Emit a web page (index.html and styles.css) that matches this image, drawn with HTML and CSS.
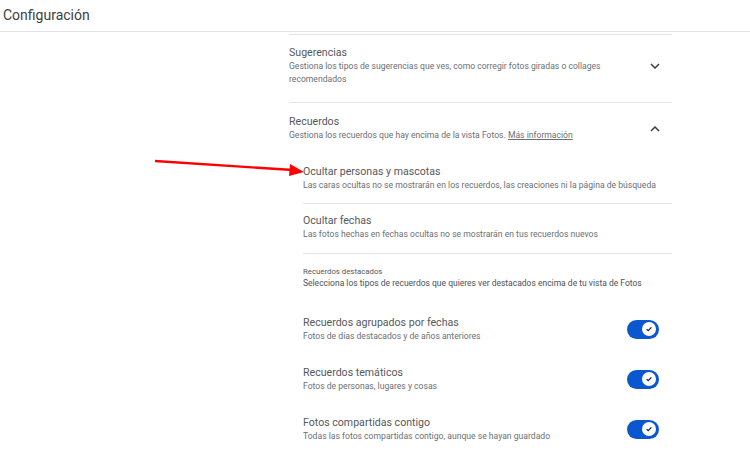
FILE: index.html
```html
<!DOCTYPE html>
<html lang="es">
<head>
    <meta charset="UTF-8">
    <meta name="viewport" content="width=device-width, initial-scale=1.0">
    <title>Configuración</title>
    <link rel="stylesheet" href="styles.css">
</head>
<body>
    <header class="topbar">Configuración</header>

    <main class="settings">
        <section class="group">
            <div class="group-head">
                <div class="text">
                    <div class="title">Sugerencias</div>
                    <div class="desc">Gestiona los tipos de sugerencias que ves, como corregir fotos giradas o collages recomendados</div>
                </div>
                <svg class="chevron" viewBox="0 0 10 6" width="10" height="6"><path d="M1 1l4 4 4-4" /></svg>
            </div>
        </section>

        <section class="group">
            <div class="group-head open">
                <div class="text">
                    <div class="title">Recuerdos</div>
                    <div class="desc">Gestiona los recuerdos que hay encima de la vista Fotos. <a href="#">Más información</a></div>
                </div>
                <svg class="chevron" viewBox="0 0 10 6" width="10" height="6"><path d="M1 5l4-4 4 4" /></svg>
            </div>

            <div class="sub">
                <div class="item first">
                    <div class="title">Ocultar personas y mascotas</div>
                    <div class="desc">Las caras ocultas no se mostrarán en los recuerdos, las creaciones ni la página de búsqueda</div>
                </div>
                <div class="item">
                    <div class="title">Ocultar fechas</div>
                    <div class="desc">Las fotos hechas en fechas ocultas no se mostrarán en tus recuerdos nuevos</div>
                </div>
                <div class="featured">
                    <div class="label">Recuerdos destacados</div>
                    <div class="desc">Selecciona los tipos de recuerdos que quieres ver destacados encima de tu vista de Fotos</div>
                </div>

                <div class="toggle-row first">
                    <div class="text">
                        <div class="title">Recuerdos agrupados por fechas</div>
                        <div class="desc">Fotos de días destacados y de años anteriores</div>
                    </div>
                    <span class="switch"><span class="thumb"><svg viewBox="0 0 10 10" width="8" height="8"><path d="M2 5.2l2 2 4-4.2" /></svg></span></span>
                </div>
                <div class="toggle-row">
                    <div class="text">
                        <div class="title">Recuerdos temáticos</div>
                        <div class="desc">Fotos de personas, lugares y cosas</div>
                    </div>
                    <span class="switch"><span class="thumb"><svg viewBox="0 0 10 10" width="8" height="8"><path d="M2 5.2l2 2 4-4.2" /></svg></span></span>
                </div>
                <div class="toggle-row">
                    <div class="text">
                        <div class="title">Fotos compartidas contigo</div>
                        <div class="desc">Todas las fotos compartidas contigo, aunque se hayan guardado</div>
                    </div>
                    <span class="switch"><span class="thumb"><svg viewBox="0 0 10 10" width="8" height="8"><path d="M2 5.2l2 2 4-4.2" /></svg></span></span>
                </div>
            </div>
        </section>
    </main>

    <!-- annotation arrow -->
    <svg class="arrow" width="160" height="30" viewBox="0 0 160 30">
        <path d="M0 5 L138 14" stroke="#f00" stroke-width="2.4" fill="none" />
        <path d="M135 8 L149 16 L134 20 Z" fill="#f00" />
    </svg>
</body>
</html>
```

FILE: styles.css
```css
body {
    margin: 0;
    font-family: Roboto, "Liberation Sans", Arial, sans-serif;
    background: #fff;
    color: #4d5156;
    position: relative;
}
.topbar {
    height: 31px;
    line-height: 30px;
    padding-left: 3px;
    font-size: 14px;
    color: #3c4043;
    border-bottom: 1px solid #e3e3e3;
}
.settings {
    width: 383px;
    margin: 2px 0 0 289px;
}
.group {
    border-top: 1px solid #e3e3e3;
}
.group-head {
    display: flex;
    align-items: center;
    justify-content: space-between;
    padding: 11px 0 16px;
}
.group-head.open {
    padding: 12px 0 0;
}
.text {
    flex: 1;
}
.title {
    font-size: 10.6px;
    line-height: 14px;
    color: #55585c;
}
.desc {
    font-size: 8.6px;
    line-height: 13px;
    color: #6b6f74;
    padding-right: 36px;
}
.desc a {
    color: #6b6f74;
}
.chevron {
    fill: none;
    stroke: #3c4043;
    stroke-width: 1.5;
    margin-right: 12px;
}
.sub {
    margin-left: 14px;
}
.item {
    padding: 10px 0 12px;
    border-bottom: 1px solid #e3e3e3;
}
.item.first {
    padding-top: 23px;
    padding-bottom: 11px;
}
.item .desc,
.featured .desc,
.toggle-row .desc {
    padding-right: 0;
}
.featured {
    padding-top: 12px;
}
.featured .label {
    font-size: 7.8px;
    line-height: 11px;
    color: #55585c;
}
.featured .desc {
    font-size: 8.5px;
    line-height: 13px;
    color: #4d5156;
}
.toggle-row {
    display: flex;
    align-items: center;
    justify-content: space-between;
    height: 50px;
}
.toggle-row.first {
    margin-top: 14px;
}
.toggle-row .title {
    line-height: 15px;
}
.switch {
    display: flex;
    align-items: center;
    justify-content: flex-end;
    width: 32px;
    height: 19px;
    box-sizing: border-box;
    padding-right: 3px;
    border-radius: 10px;
    background: #0b57d0;
    margin-right: 13px;
}
.thumb {
    display: flex;
    align-items: center;
    justify-content: center;
    width: 14px;
    height: 14px;
    border-radius: 50%;
    background: #fff;
}
.thumb svg {
    fill: none;
    stroke: #041e49;
    stroke-width: 1.5;
}
.arrow {
    position: absolute;
    left: 155px;
    top: 156px;
}
```
